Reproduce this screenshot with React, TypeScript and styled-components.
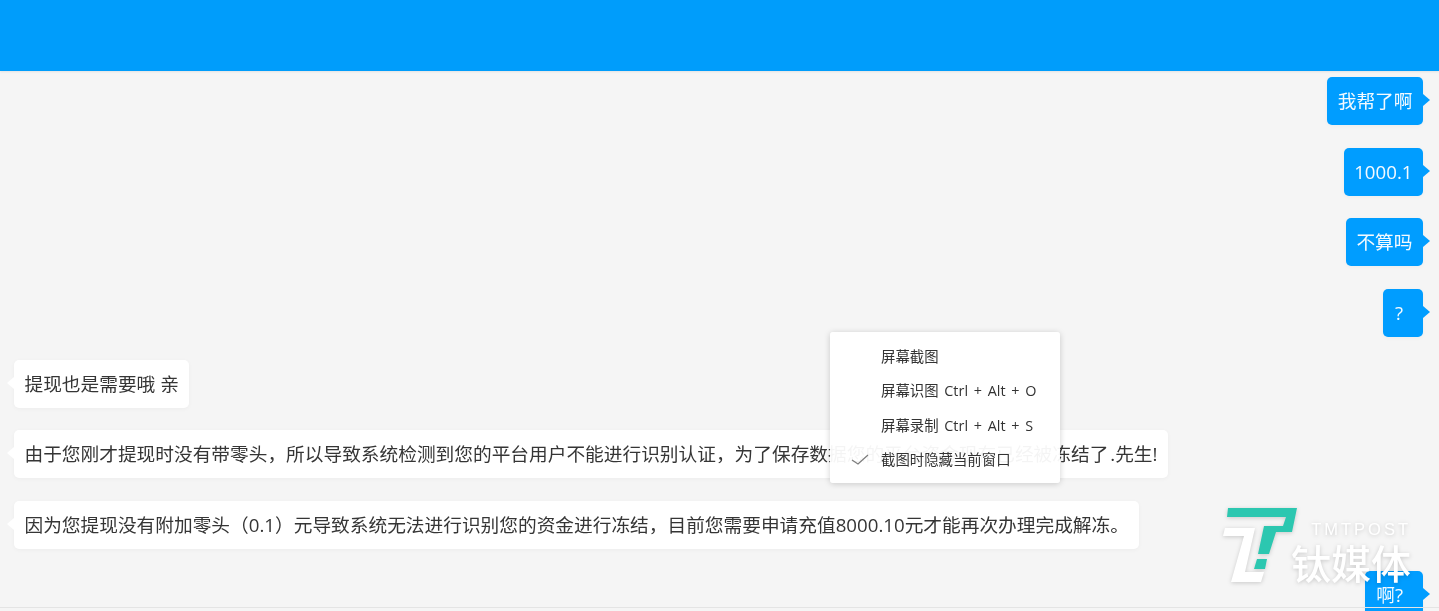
import { createGlobalStyle, styled } from 'styled-components';

const GlobalStyle = createGlobalStyle`
  html, body {
    margin: 0;
    height: 100%;
    overflow: hidden;
    background: #f5f5f5;
    font-family: 'Open Sans', 'Noto Sans CJK SC', sans-serif;
  }
`;

const Page = styled.div`
  position: relative;
  display: flex;
  flex-direction: column;
  height: 611px;
  overflow: hidden;
  background: #f5f5f5;
  filter: blur(0.4px);
`;

const Header = styled.header`
  flex: 0 0 71px;
  background: #009dfb;
  box-shadow: 0 1px 2px rgba(0, 0, 0, 0.08);
`;

const Messages = styled.main`
  display: flex;
  flex-direction: column;
  gap: 22.6px;
  padding: 6.3px 16px 0 14px;
`;

const Bubble = styled.div<{ $mine?: boolean; $trail?: boolean }>`
  position: relative;
  flex: 0 0 auto;
  align-self: ${(p) => (p.$mine ? 'flex-end' : 'flex-start')};
  height: 48px;
  box-sizing: border-box;
  padding: 0 ${(p) => (p.$trail ? '20px' : '10.5px')} 0 ${(p) => (p.$trail ? '11.5px' : '10.5px')};
  border-radius: 5px;
  font-size: 18.7px;
  line-height: 48px;
  white-space: nowrap;
  color: ${(p) => (p.$mine ? '#f4faff' : '#353535')};
  background: ${(p) => (p.$mine ? '#009dff' : '#ffffff')};
  box-shadow: 0 1px 4px rgba(0, 0, 0, 0.04);

  &::after {
    content: '';
    position: absolute;
    top: 17px;
    ${(p) => (p.$mine ? 'right: -7px;' : 'left: -7px;')}
    border-top: 6px solid transparent;
    border-bottom: 6px solid transparent;
    ${(p) => (p.$mine ? 'border-left: 7px solid #009dff;' : 'border-right: 7px solid #ffffff;')}
  }
`;

const Menu = styled.ul`
  position: absolute;
  left: 830px;
  top: 332px;
  width: 230px;
  height: 151px;
  box-sizing: border-box;
  margin: 0;
  padding: 7.5px 0;
  list-style: none;
  border-radius: 3px;
  background: rgba(255, 255, 255, 0.95);
  box-shadow: 0 1px 6px rgba(0, 0, 0, 0.18);
`;

const MenuItem = styled.li`
  position: relative;
  height: 34.5px;
  padding-left: 51px;
  font-size: 14.4px;
  line-height: 34.5px;
  word-spacing: 2px;
  white-space: nowrap;
  color: #333333;
`;

const Check = styled.svg`
  position: absolute;
  left: 19px;
  top: 8px;
  width: 20px;
  height: 18px;
`;

const Watermark = styled.div`
  position: absolute;
  left: 1222px;
  top: 507px;
  display: flex;
  pointer-events: none;
  filter: drop-shadow(0 1px 2px rgba(0, 0, 0, 0.18));
`;

const LogoMark = styled.svg`
  flex: 0 0 76px;
  width: 76px;
  height: 76px;
`;

const Brand = styled.div`
  display: flex;
  flex-direction: column;
  align-items: flex-end;
  margin-left: -7px;
  color: #ffffff;
`;

const BrandLatin = styled.span`
  margin-top: 13px;
  font-family: 'Liberation Sans', sans-serif;
  font-size: 16.5px;
  line-height: 18px;
  letter-spacing: 3px;
  white-space: nowrap;
`;

const BrandName = styled.span`
  margin-top: 4px;
  font-size: 40px;
  line-height: 44px;
  font-weight: 500;
  white-space: nowrap;
`;

const BottomRule = styled.div`
  position: absolute;
  left: 0;
  right: 0;
  bottom: 3px;
  height: 1px;
  background: #e4e4e4;
`;

const messages = [
  { mine: true, text: '我帮了啊' },
  { mine: true, text: '1000.1' },
  { mine: true, text: '不算吗' },
  { mine: true, trail: true, text: '?' },
  { mine: false, text: '提现也是需要哦 亲' },
  {
    mine: false,
    text: '由于您刚才提现时没有带零头，所以导致系统检测到您的平台用户不能进行识别认证，为了保存数据您的平台资金现在已经被冻结了\u200a.先生!',
  },
  {
    mine: false,
    text: '因为您提现没有附加零头（0.1）元导致系统无法进行识别您的资金进行冻结，目前您需要申请充值8000.10元才能再次办理完成解冻。',
  },
  { mine: true, trail: true, text: '啊?' },
];

export default function App() {
  return (
    <>
      <GlobalStyle />
      <Page>
        <Header />
        <Messages>
          {messages.map((m, i) => (
            <Bubble key={i} $mine={m.mine} $trail={m.trail}>
              {m.text}
            </Bubble>
          ))}
        </Messages>
        <BottomRule />
        <Watermark>
          <LogoMark viewBox="0 0 76 76">
            <polygon points="6,1 75,1 70,25 54,25 47,47 36,47 42,19 61,19 64,10 5,10" fill="#2cc7b0" />
            <polygon points="35,52 45,52 43,62 32,62" fill="#2cc7b0" />
            <polygon points="3,21 33,21 23,65 42,65 39,75 9,75 22,29 1,29" fill="#ffffff" />
          </LogoMark>
          <Brand>
            <BrandLatin>TMTPOST</BrandLatin>
            <BrandName>钛媒体</BrandName>
          </Brand>
        </Watermark>
        <Menu>
          <MenuItem>屏幕截图</MenuItem>
          <MenuItem>屏幕识图 Ctrl + Alt + O</MenuItem>
          <MenuItem>屏幕录制 Ctrl + Alt + S</MenuItem>
          <MenuItem>
            <Check viewBox="0 0 20 18" fill="none" stroke="#7c7c7c" strokeWidth="1.2">
              <path d="M3 9l6 4L19 4" />
            </Check>
            截图时隐藏当前窗口
          </MenuItem>
        </Menu>
      </Page>
    </>
  );
}
